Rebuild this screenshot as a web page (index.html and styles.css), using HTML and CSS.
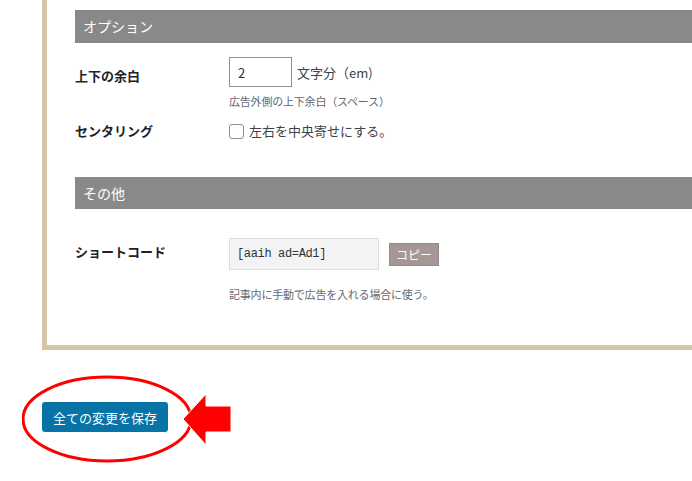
FILE: index.html
```html
<!DOCTYPE html>
<html lang="ja">
<head>
    <meta charset="UTF-8">
    <title>広告設定</title>
    <link rel="stylesheet" href="styles.css">
</head>
<body>
    <div class="panel">
        <!-- オプション -->
        <h2 class="section-title">オプション</h2>

        <div class="field field-margin">
            <div class="field-label">上下の余白</div>
            <div class="field-body">
                <div class="inline">
                    <input class="num-input" type="text" value="2">
                    <span class="unit">文字分（em)</span>
                </div>
                <p class="desc">広告外側の上下余白（スペース）</p>
            </div>
        </div>

        <div class="field field-center">
            <div class="field-label">センタリング</div>
            <div class="field-body">
                <label class="check"><span class="checkbox"></span>左右を中央寄せにする。</label>
            </div>
        </div>

        <!-- その他 -->
        <h2 class="section-title section-other">その他</h2>

        <div class="field field-code">
            <div class="field-label">ショートコード</div>
            <div class="field-body">
                <div class="inline">
                    <input class="code-input" type="text" value="[aaih ad=Ad1]" readonly>
                    <button class="copy-btn">コピー</button>
                </div>
                <p class="desc">記事内に手動で広告を入れる場合に使う。</p>
            </div>
        </div>
    </div>

    <div class="save-area">
        <button class="save-btn">全ての変更を保存</button>
        <!-- 注釈（赤丸と矢印） -->
        <svg class="annotation" width="220" height="92" viewBox="0 0 220 92">
            <ellipse cx="85" cy="44" rx="84" ry="42" fill="none" stroke="#f00" stroke-width="3"/>
            <polygon points="161,44 184,19 184,31 209,31 209,57 184,57 184,70" fill="#f00" stroke="#fff" stroke-width="1"/>
        </svg>
    </div>
</body>
</html>
```

FILE: styles.css
```css
body {
    margin: 0;
    min-height: 481px;
    font-family: "Noto Sans CJK JP", "Noto Sans", sans-serif;
    color: #3c434a;
    background: #fff;
    overflow: hidden;
}

.panel {
    margin-left: 42px;
    padding: 10px 0 43px 28px;
    border-left: 5px solid #d5c5a9;
    border-bottom: 5px solid #d5c5a9;
}

.section-title {
    margin: 0;
    height: 33px;
    line-height: 33px;
    padding-left: 8px;
    background: #898989;
    color: #fff;
    font-size: 14px;
    font-weight: normal;
}

.section-other {
    margin-top: 36px;
    height: 32px;
    line-height: 32px;
}

.field {
    display: grid;
    grid-template-columns: 154px 1fr;
}

.field-label {
    font-size: 13px;
    font-weight: bold;
    color: #1d2327;
    line-height: 20px;
}

.field-margin {
    margin-top: 14px;
}

.field-margin .field-label {
    padding-top: 9px;
}

.field-center {
    margin-top: 12px;
    align-items: center;
}

.field-code {
    margin-top: 29px;
}

.field-code .field-label {
    padding-top: 4px;
}

.inline {
    display: flex;
    align-items: center;
}

.num-input {
    box-sizing: border-box;
    width: 63px;
    height: 30px;
    padding: 0 8px;
    border: 1px solid #8c8f94;
    font-family: inherit;
    font-size: 13px;
    color: #2c3338;
}

.unit {
    margin-left: 5px;
    font-size: 13px;
}

.desc {
    margin: 6px 0 0;
    font-size: 11px;
    line-height: 16px;
    color: #646970;
    letter-spacing: -0.2px;
}

.field-code .desc {
    margin-top: 16px;
}

.check {
    display: flex;
    align-items: center;
    font-size: 13px;
    line-height: 20px;
}

.checkbox {
    box-sizing: border-box;
    width: 15px;
    height: 15px;
    margin-right: 5px;
    border: 1px solid #8c8f94;
    border-radius: 3px;
    background: #fff;
}

.code-input {
    box-sizing: border-box;
    width: 150px;
    height: 32px;
    padding: 0 7px;
    border: 1px solid #dcdcde;
    background: #f3f3f3;
    font-family: "Liberation Mono", monospace;
    font-size: 12px;
    letter-spacing: -0.35px;
    color: #2c3338;
}

.copy-btn {
    margin-left: 10px;
    width: 50px;
    height: 23px;
    padding: 0;
    border: 1px solid #988a89;
    background: #a59796;
    color: #fff;
    font-family: inherit;
    font-size: 12px;
}

.save-area {
    position: relative;
    margin-top: 52px;
    padding-left: 42px;
}

.save-btn {
    width: 126px;
    height: 30px;
    padding: 0;
    border: none;
    border-radius: 3px;
    background: #0873a7;
    color: #fff;
    font-family: inherit;
    font-size: 13px;
}

.annotation {
    position: absolute;
    left: 22px;
    top: -27px;
}
```
